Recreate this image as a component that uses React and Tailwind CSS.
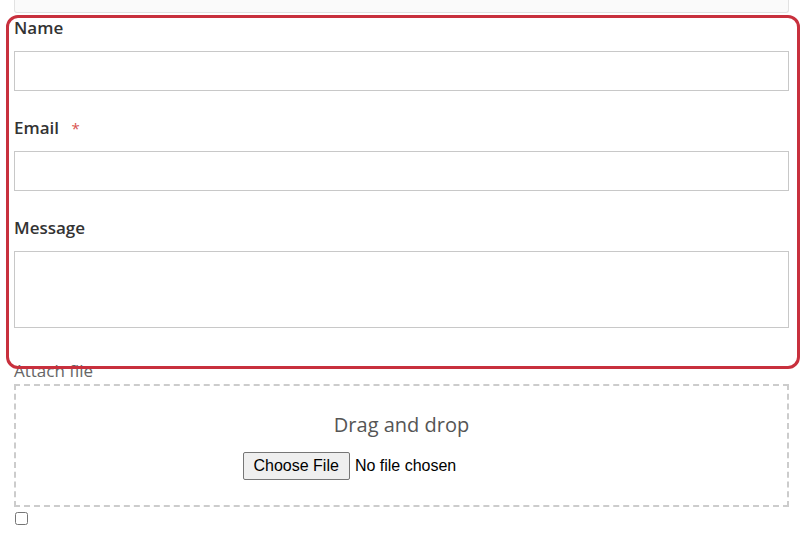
export default function App() {
  const label = "block text-[17px] leading-[24px] font-semibold text-[#333]";
  const field = "block w-full border border-[#c8c8c8] bg-white";
  return (
    <div className="relative w-[811px] h-[541px] bg-white overflow-hidden" style={{ fontFamily: '"Open Sans", sans-serif' }}>
      <div className="px-[14px] w-[803px]">
        <div className="h-[13px] border border-t-0 border-[#e2e2e2] bg-[#fafafa] rounded-b-[3px]" />
        <label className={`${label} mt-[3px]`}>Name</label>
        <input className={`${field} h-[40px] mt-[11px]`} />
        <label className={`${label} mt-[25px]`}>
          Email <span className="text-[#d9534f] text-[15px] font-normal ml-[8px]">*</span>
        </label>
        <input className={`${field} h-[40px] mt-[11px]`} />
        <label className={`${label} mt-[25px]`}>Message</label>
        <textarea className={`${field} h-[77px] mt-[11px] resize-none`} />
        <div className="text-[17px] leading-[24px] text-[#666] mt-[31px]">Attach file</div>
        <div className="h-[123px] border-2 border-dashed border-[#cccccc] flex flex-col items-center mt-[1px]">
          <div className="text-[20px] leading-[28px] text-[#555] mt-[25px]">Drag and drop</div>
          <input
            type="file"
            className="mt-[13px] text-[16px] -ml-[15px] file:text-[16px] file:border file:border-solid file:border-[#767676] file:bg-[#efefef] file:rounded-[2px] file:px-[10px] file:py-[1px] file:mr-[5px] file:text-black"
            style={{ fontFamily: '"Liberation Sans", Arial, sans-serif' }}
          />
        </div>
        <input type="checkbox" className="block mt-[5px] ml-[1px] w-[13px] h-[13px]" />
      </div>
      <div className="absolute left-[6px] top-[15px] w-[794px] h-[354px] border-[3px] border-[#c8303d] rounded-[12px] pointer-events-none" />
    </div>
  );
}
